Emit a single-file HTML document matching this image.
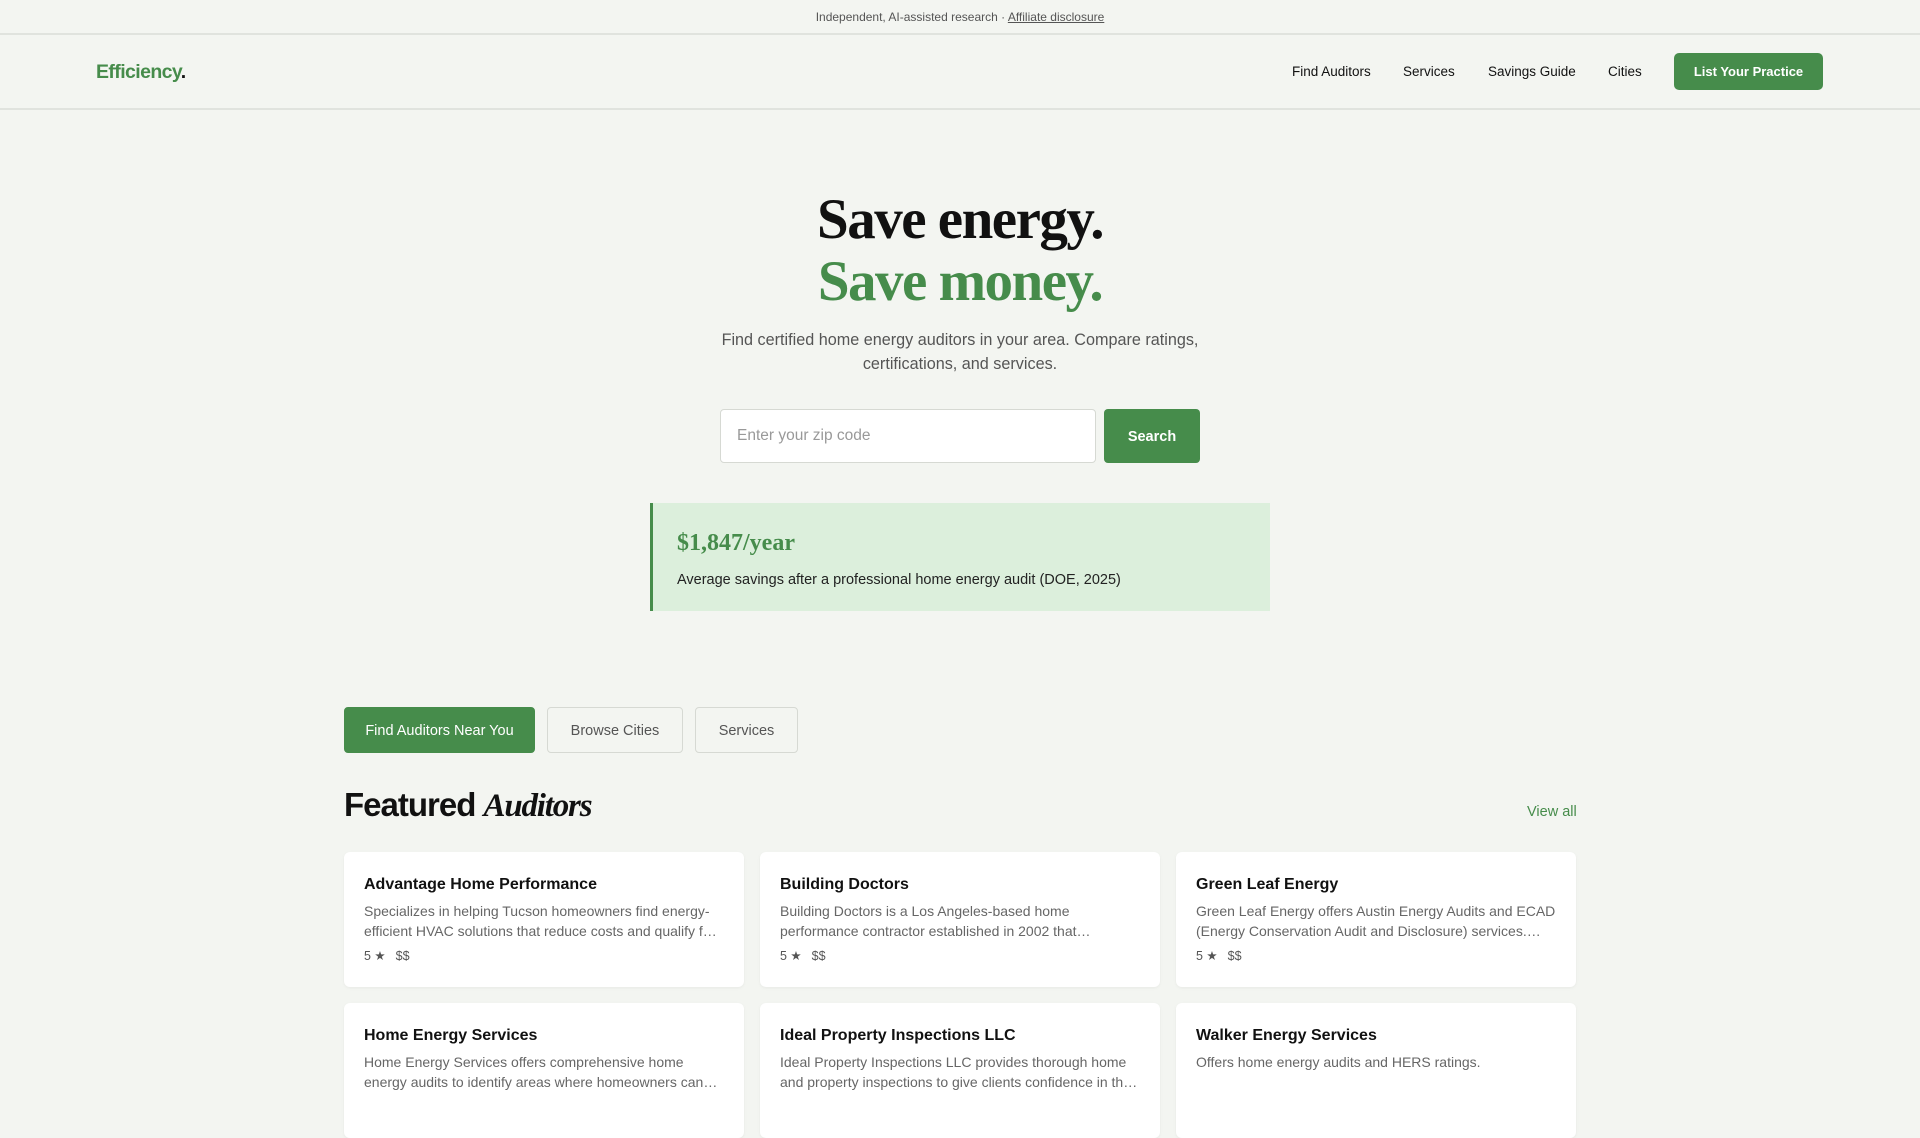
<!DOCTYPE html>
<html><head><meta charset="utf-8"><style>
*{box-sizing:border-box;margin:0;padding:0}
body{width:1920px;height:1080px;overflow:hidden;background:#f3f5f1;font-family:"Liberation Sans",sans-serif;color:#111}
.top{height:35px;border-bottom:2px solid #e0e3de;text-align:center;font-size:12px;color:#555;line-height:34px}
.top a{color:#555;text-decoration:underline}
nav{height:75px;border-bottom:2px solid #e0e3de;position:relative}
.logo{position:absolute;left:96px;top:26px;font-size:19.5px;font-weight:bold;color:#468c4b;letter-spacing:-0.6px}
.logo span{color:#111}
.links a{position:absolute;top:29px;font-size:13.5px;color:#111;text-decoration:none}
.btn{position:absolute;left:1674px;top:18px;width:149px;height:37px;background:#468c4b;color:#fff;border-radius:5px;font-size:13px;font-weight:bold;text-align:center;line-height:37px}
h1{font-family:"Liberation Serif",serif;font-size:57px;text-align:center;line-height:62px;letter-spacing:-1.5px;position:absolute;top:189px;width:1920px}
h1 .g{color:#468c4b}
.sub{position:absolute;top:328px;left:700px;width:520px;text-align:center;font-size:16.2px;line-height:24px;color:#555}
.inp{position:absolute;left:720px;top:409px;width:376px;height:54px;background:#fff;border:1px solid #d6d9d3;border-radius:4px;font-size:15.5px;color:#999;padding-left:16px;line-height:52px}
.sbtn{position:absolute;left:1104px;top:409px;width:96px;height:54px;background:#468c4b;border-radius:4px;color:#fff;font-weight:bold;font-size:14.5px;text-align:center;line-height:56px}
.stat{position:absolute;left:650px;top:503px;width:620px;height:108px;background:#dcefdc;border-left:3px solid #468c4b;padding:27px 0 0 24px}
.stat b{font-family:"Liberation Serif",serif;font-size:24px;color:#468c4b;display:block;margin-bottom:15px}
.stat p{font-size:14.5px;color:#222}
.tab{position:absolute;top:707px;height:46px;border:1px solid #d6d9d3;border-radius:4px;background:#f3f5f1;font-size:14.5px;color:#555;text-align:center;line-height:46px}
.tab.on{background:#468c4b;color:#fff;border-color:#468c4b}
h2{position:absolute;left:344px;top:786px;font-size:33px;letter-spacing:-1px;font-weight:bold}
h2 i{font-family:"Liberation Serif",serif;letter-spacing:-1.2px}
.va{position:absolute;left:1527px;top:804px;font-size:14.5px;color:#468c4b}
.card{position:absolute;width:400px;height:135px;background:#fff;border-radius:6px;box-shadow:0 1px 3px rgba(0,0,0,.05);padding:24px 20px}
.card h3{font-size:16px;margin-bottom:7px}
.card p{font-size:14px;line-height:20px;color:#666;display:-webkit-box;-webkit-line-clamp:2;-webkit-box-orient:vertical;overflow:hidden}
.card .m{font-size:12.5px;color:#555;margin-top:7px}
.card .m span{margin-left:10px}
</style></head><body>
<div class="top">Independent, AI-assisted research · <a>Affiliate disclosure</a></div>
<nav><div class="logo">Efficiency<span>.</span></div>
<div class="links"><a style="left:1292px">Find Auditors</a><a style="left:1403px">Services</a><a style="left:1488px">Savings Guide</a><a style="left:1608px">Cities</a></div>
<div class="btn">List Your Practice</div></nav>
<h1>Save energy.<br><span class="g">Save money.</span></h1>
<div class="sub">Find certified home energy auditors in your area. Compare ratings, certifications, and services.</div>
<div class="inp">Enter your zip code</div><div class="sbtn">Search</div>
<div class="stat"><b>$1,847/year</b><p>Average savings after a professional home energy audit (DOE, 2025)</p></div>
<div class="tab on" style="left:344px;width:191px">Find Auditors Near You</div>
<div class="tab" style="left:547px;width:136px">Browse Cities</div>
<div class="tab" style="left:695px;width:103px">Services</div>
<h2>Featured <i>Auditors</i></h2><div class="va">View all</div>
<div class="card" style="left:344px;top:852px"><h3>Advantage Home Performance</h3><p>Specializes in helping Tucson homeowners find energy-efficient HVAC solutions that reduce costs and qualify for rebates and incentives.</p><div class="m">5 ★<span>$$</span></div></div>
<div class="card" style="left:760px;top:852px"><h3>Building Doctors</h3><p>Building Doctors is a Los Angeles-based home performance contractor established in 2002 that specializes in audits.</p><div class="m">5 ★<span>$$</span></div></div>
<div class="card" style="left:1176px;top:852px"><h3>Green Leaf Energy</h3><p>Green Leaf Energy offers Austin Energy Audits and ECAD (Energy Conservation Audit and Disclosure) services. They help homeowners.</p><div class="m">5 ★<span>$$</span></div></div>
<div class="card" style="left:344px;top:1003px"><h3>Home Energy Services</h3><p>Home Energy Services offers comprehensive home energy audits to identify areas where homeowners can save.</p></div>
<div class="card" style="left:760px;top:1003px"><h3>Ideal Property Inspections LLC</h3><p>Ideal Property Inspections LLC provides thorough home and property inspections to give clients confidence in their purchase.</p></div>
<div class="card" style="left:1176px;top:1003px"><h3>Walker Energy Services</h3><p>Offers home energy audits and HERS ratings.</p></div>
</body></html>
